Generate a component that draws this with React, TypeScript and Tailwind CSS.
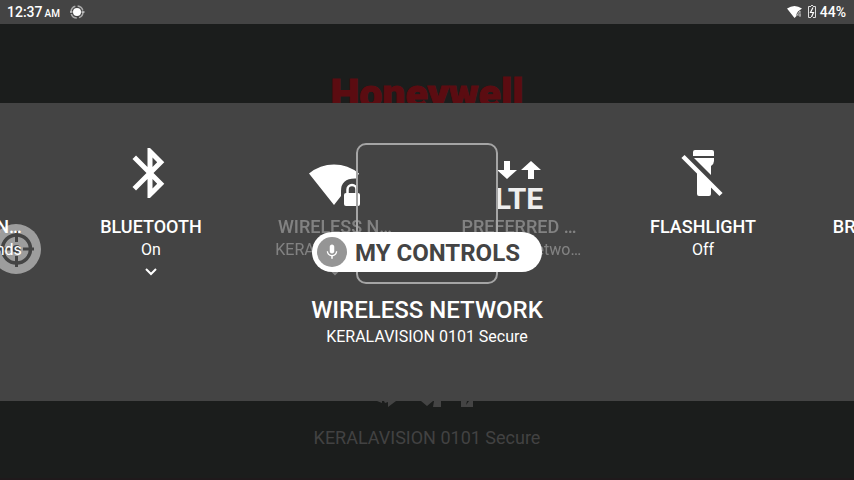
import React from "react";

function BluetoothIcon() {
  return (
    <svg width="60" height="60" viewBox="0 0 24 24" fill="#fff" aria-hidden="true">
      <path d="M17.310 7.71L11.600 2h-1v7.59L6.010 5 4.600 6.41 10.190 12 4.600 17.59 6.010 19 10.600 14.41V22h1l5.71-5.71-4.3-4.29 4.3-4.29zM12.600 5.83l1.88 1.88L12.600 9.59V5.83zm1.88 10.46L12.600 18.17v-3.76l1.88 1.88z" />
    </svg>
  );
}

function WifiLockIcon() {
  return (
    <svg width="52" height="66" viewBox="0 0 52 66" fill="none" aria-hidden="true">
      <path d="M0 30.500Q11 21.500 25 21.500Q39 21.500 50 30.500L47 35.500Q32 35 32 48V53L25 62Z" fill="#fff" />
      <rect x="35" y="50" width="16" height="13" rx="2" fill="#fff" />
      <path d="M38.500 51v-4.500a4.500 4.500 0 0 1 9 0v4.500" stroke="#fff" strokeWidth="2.500" />
    </svg>
  );
}

function LteIcon() {
  return (
    <svg width="50" height="68" viewBox="0 0 50 68" fill="#fff" aria-hidden="true">
      <path d="M10 18h6v9h7l-10 9-10-9h7zM34 36h6v-9h7l-10-9-10 9h7z" />
      <text x="25" y="66" textAnchor="middle" fontFamily="Roboto, sans-serif" fontWeight="700" fontSize="30" fill="#eee">
        LTE
      </text>
    </svg>
  );
}

function FlashlightOffIcon() {
  return (
    <svg width="44" height="60" viewBox="-1 0 44 60" fill="#fff" aria-hidden="true">
      <path d="M11 9q0-2 2-2h17q2 0 2 2v4H11zM12 15h20v3q0 3-3 5v9zM15 27l14 16v8q0 2-2 2H17q-2 0-2-2z" />
      <path d="M1 13.500L39 51.500" stroke="#fff" strokeWidth="4.500" />
    </svg>
  );
}

function Chevron() {
  return (
    <svg width="12" height="8" viewBox="0 0 12 8" fill="none" aria-hidden="true">
      <path d="M1 1l5 5 5-5" stroke="#fff" strokeWidth="2" />
    </svg>
  );
}

type Tile = {
  title: string;
  detail: string;
  icon?: React.ReactNode;
  dim?: boolean;
  expandable?: boolean;
};

const tiles: Tile[] = [
  { title: "STANDBY N…", detail: "For 30 seconds" },
  { title: "BLUETOOTH", detail: "On", icon: <BluetoothIcon />, expandable: true },
  { title: "WIRELESS N…", detail: "KERALAVISION…", icon: <WifiLockIcon />, dim: true, expandable: true },
  { title: "PREFERRED …", detail: "Preferred netwo…", icon: <LteIcon />, dim: true },
  { title: "FLASHLIGHT", detail: "Off", icon: <FlashlightOffIcon /> },
  { title: "BRIGHTNESS", detail: "" },
];

function ControlTile({ title, detail, icon, dim, expandable }: Tile) {
  return (
    <button type="button" className="flex w-46 shrink-0 flex-col items-center">
      <span className="flex h-[72px] items-start justify-center">{icon}</span>
      <span className={dim ? "flex flex-col items-center opacity-33" : "flex flex-col items-center"}>
        <span className="text-lg leading-6 font-medium whitespace-nowrap">{title}</span>
        <span className="h-[22px] text-base leading-[22px] whitespace-nowrap">{detail}</span>
        <span className="mt-[7px]">{expandable && <Chevron />}</span>
      </span>
    </button>
  );
}

function StatusBar() {
  return (
    <header className="flex h-6 shrink-0 items-center justify-between bg-[#444444] pr-2 pl-[7px] text-sm font-medium">
      <div className="flex items-center">
        <div className="flex items-baseline gap-0.5">
          <span>12:37</span>
          <span className="text-[10px]">AM</span>
        </div>
        <svg className="ml-2.5" width="16" height="14" viewBox="0 0 16 14" fill="none" aria-hidden="true">
          <circle cx="7" cy="7" r="6" stroke="#aaa" strokeWidth="1.500" strokeDasharray="7 2.400" />
          <circle cx="7" cy="7" r="4" fill="#fff" />
          <path d="M0 7h2.500M11.500 7h3" stroke="#ccc" strokeWidth="1.500" />
        </svg>
      </div>
      <div className="flex items-center">
        <svg width="15" height="12" viewBox="0 0 15 12" aria-hidden="true">
          <path d="M0 2.500Q7.500-2.500 15 2.500L11 5.500 9.500 8v2L7.500 12z" fill="#fff" />
          <path d="M13 11V5l-3 4h4" stroke="#bbb" fill="none" />
        </svg>
        <svg className="mr-1 ml-1.5" width="8" height="14" viewBox="0 0 8 14" fill="none" aria-hidden="true">
          <path d="M3 0.500h2M3 1.500H0.500V12.500H3M5 1.500H7.500V12.500H5" stroke="#ddd" />
          <path d="M5 2.500L2.500 7.500h3L3.500 12" stroke="#fff" strokeWidth="1.200" />
        </svg>
        <span>44%</span>
      </div>
    </header>
  );
}

function AssistButton() {
  return (
    <button type="button" aria-label="Assist" className="absolute top-[121px] -left-[9px]">
      <svg width="50" height="50" viewBox="0 0 50 50" aria-hidden="true">
        <mask id="crosshair">
          <circle cx="25" cy="25" r="25" fill="#fff" />
          <circle cx="25.500" cy="25" r="14" stroke="#000" strokeWidth="3.500" fill="none" />
          <circle cx="25.500" cy="25" r="4" fill="#000" />
          <path d="M25.500 7v11M25.500 32v11M8 25h11M32 25h11" stroke="#000" strokeWidth="3" />
        </mask>
        <rect width="50" height="50" fill="#fff" fillOpacity="0.480" mask="url(#crosshair)" />
      </svg>
    </button>
  );
}

export default function App() {
  return (
    <div className="flex h-screen flex-col overflow-hidden bg-[#1b1d1c] font-[Roboto,sans-serif] text-white">
      <StatusBar />
      <div className="flex h-[79px] shrink-0 items-start justify-center overflow-hidden pt-[46px]">
        <div className="text-[41px] leading-[48px] font-black text-[#5b0c11] [-webkit-text-stroke:1px_#5b0c11]">Honeywell</div>
      </div>
      <main className="relative h-[298px] shrink-0 overflow-hidden bg-[#444444]">
        <div className="flex justify-center pt-10">
          {tiles.map((tile) => (
            <ControlTile key={tile.title} {...tile} />
          ))}
        </div>
        <div className="pointer-events-none absolute top-10 left-1/2 h-[141px] w-[142px] -translate-x-1/2 rounded-[10px] border-2 border-[#a5a5a5]" />
        <button
          type="button"
          className="absolute top-[129px] left-1/2 flex h-10 w-[230px] -translate-x-1/2 items-center gap-2 rounded-full bg-white pl-[5px] text-2xl font-bold whitespace-nowrap text-[#444444]"
        >
          <span className="flex size-[30px] shrink-0 items-center justify-center rounded-full bg-[#959595]">
            <svg width="18" height="18" viewBox="0 0 24 24" fill="#fff" aria-hidden="true">
              <path d="M12 14c1.660 0 3-1.340 3-3V5c0-1.660-1.340-3-3-3S9 3.340 9 5v6c0 1.660 1.340 3 3 3zM17.300 11c0 3-2.540 5.100-5.300 5.100S6.700 14 6.700 11H5c0 3.410 2.720 6.230 6 6.720V21h2v-3.280c3.280-.48 6-3.300 6-6.720z" />
            </svg>
          </span>
          <span className="pt-0.5">MY CONTROLS</span>
        </button>
        <AssistButton />
        <div className="absolute inset-x-0 top-[191px] text-center">
          <h1 className="text-2xl leading-8 font-medium">WIRELESS NETWORK</h1>
          <p className="text-base leading-[22px]">KERALAVISION 0101 Secure</p>
        </div>
      </main>
      <footer className="flex flex-1 flex-col items-center text-lg text-[#424242]">
        <svg width="110" height="6" viewBox="0 0 110 6" fill="#444" aria-hidden="true">
          <path d="M5 0h5v2zM12 0h12l-8 6V1l-3 1zM49 0h12l-6 5zM62 0h7v6h-8zM89 0h12v6H89z" />
          <path d="M95 0h2l-3 4z" fill="#1b1d1c" />
        </svg>
        <p className="mt-[19px] leading-6 whitespace-nowrap">KERALAVISION 0101 Secure</p>
        <div className="mt-auto h-0.5 w-full bg-[#1f191b]" />
      </footer>
    </div>
  );
}
